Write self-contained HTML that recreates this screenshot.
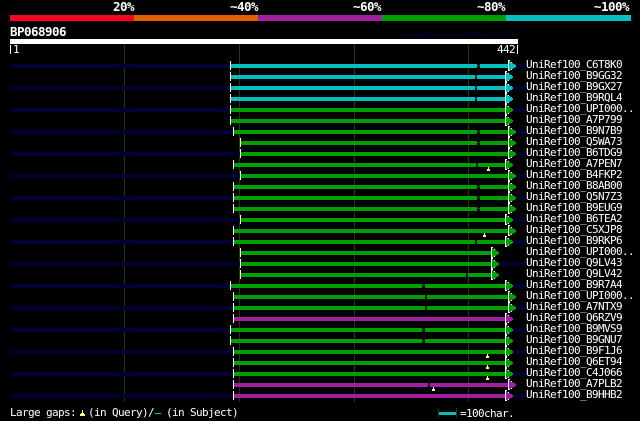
<!DOCTYPE html>
<html><head><meta charset="utf-8"><style>
html,body{margin:0;padding:0;background:#000;width:640px;height:421px;overflow:hidden}
svg{display:block}
text{font-family:"DejaVu Sans Mono","Liberation Mono",monospace;font-size:11px;letter-spacing:-.62px;fill:#fff}
.b{font-size:12.5px;letter-spacing:-.53px;font-weight:bold}
.h{font-size:8.3px;letter-spacing:0;font-weight:bold;fill:#000033}
.bars rect{height:4px}
</style></head><body>
<svg width="640" height="421" viewBox="0 0 640 421" shape-rendering="crispEdges">
<defs>
<g id="w"><rect x="0" y="-3" width="1" height="9" fill="#fff"/></g>
<g id="tw" fill="#fff"><rect x="0" y="-4" width="1" height="11"/><rect x="1" y="-4" width="1" height="1"/><rect x="3" y="-2" width="1" height="1"/><rect x="3" y="5" width="1" height="1"/><rect x="1" y="6" width="1" height="1"/></g>
<g id="t"><rect x="1" y="-3" width="1" height="9"/><rect x="2" y="-2" width="1" height="8"/><rect x="3" y="-1" width="2" height="6"/><rect x="5" y="0" width="2" height="4"/><rect x="7" y="1" width="1" height="2"/></g>
<g id="ac"><use href="#t" fill="#00c0c0"/><use href="#tw"/></g>
<g id="ag"><use href="#t" fill="#00a000"/><use href="#tw"/></g>
<g id="ap"><use href="#t" fill="#a020a0"/><use href="#tw"/></g>
<g id="m" fill="#ffff80"><rect x="1" y="3" width="1" height="2"/><rect x="0" y="5" width="3" height="2"/></g>
</defs>
<rect width="640" height="421" fill="#000"/>
<rect x="10" y="15" width="124" height="6" fill="#ff0020"/>
<rect x="134" y="15" width="124" height="6" fill="#e06000"/>
<rect x="258" y="15" width="124" height="6" fill="#a020a0"/>
<rect x="382" y="15" width="124" height="6" fill="#00a000"/>
<rect x="506" y="15" width="125" height="6" fill="#00c0c0"/>
<text class="b" x="113" y="11">20%</text>
<text class="b" x="230" y="11">~40%</text>
<text class="b" x="353" y="11">~60%</text>
<text class="b" x="477" y="11">~80%</text>
<text class="b" x="594" y="11">~100%</text>
<text class="b" x="10" y="36">BP068906</text>
<text class="h" x="402" y="37">AlignView.pm Beta rel.7</text>
<rect x="10" y="39" width="508" height="5" fill="#fff"/>
<rect x="10" y="45" width="1" height="9" fill="#fff"/>
<text x="13" y="53">1</text>
<text x="497" y="53">442</text>
<rect x="517" y="45" width="1" height="9" fill="#fff"/>
<g fill="#333300"><rect x="124" y="44" width="1" height="358"/><rect x="239" y="44" width="1" height="358"/><rect x="354" y="44" width="1" height="358"/><rect x="468" y="44" width="1" height="358"/></g>

<g fill="#000033" class="bars">
<rect x="10" y="64" width="220" height="3"/><rect x="514" y="64" width="12" height="3"/>
<rect x="10" y="86" width="220" height="3"/><rect x="511" y="86" width="15" height="3"/>
<rect x="10" y="108" width="220" height="3"/><rect x="511" y="108" width="15" height="3"/>
<rect x="10" y="130" width="223" height="3"/><rect x="514" y="130" width="12" height="3"/>
<rect x="10" y="152" width="230" height="3"/><rect x="514" y="152" width="12" height="3"/>
<rect x="10" y="174" width="230" height="3"/><rect x="514" y="174" width="12" height="3"/>
<rect x="10" y="196" width="223" height="3"/><rect x="514" y="196" width="12" height="3"/>
<rect x="10" y="218" width="230" height="3"/><rect x="511" y="218" width="15" height="3"/>
<rect x="10" y="240" width="223" height="3"/><rect x="511" y="240" width="15" height="3"/>
<rect x="10" y="262" width="230" height="3"/><rect x="497" y="262" width="29" height="3"/>
<rect x="10" y="284" width="220" height="3"/><rect x="511" y="284" width="15" height="3"/>
<rect x="10" y="306" width="223" height="3"/><rect x="514" y="306" width="12" height="3"/>
<rect x="10" y="328" width="220" height="3"/><rect x="511" y="328" width="15" height="3"/>
<rect x="10" y="350" width="223" height="3"/><rect x="511" y="350" width="15" height="3"/>
<rect x="10" y="372" width="223" height="3"/><rect x="511" y="372" width="15" height="3"/>
<rect x="10" y="394" width="223" height="3"/><rect x="511" y="394" width="15" height="3"/>
</g>

<g fill="#00c0c0" class="bars">
<rect x="231" y="64" width="277" height="3"/>
<rect x="231" y="75" width="274" height="3"/>
<rect x="231" y="86" width="274" height="3"/>
<rect x="231" y="97" width="274" height="3"/>
</g>
<g fill="#00a000" class="bars">
<rect x="231" y="108" width="274" height="3"/>
<rect x="231" y="119" width="274" height="3"/>
<rect x="234" y="130" width="274" height="3"/>
<rect x="241" y="141" width="267" height="3"/>
<rect x="241" y="152" width="267" height="3"/>
<rect x="234" y="163" width="271" height="3"/>
<rect x="241" y="174" width="267" height="3"/>
<rect x="234" y="185" width="274" height="3"/>
<rect x="234" y="196" width="274" height="3"/>
<rect x="234" y="207" width="274" height="3"/>
<rect x="241" y="218" width="264" height="3"/>
<rect x="234" y="229" width="274" height="3"/>
<rect x="234" y="240" width="271" height="3"/>
<rect x="241" y="251" width="250" height="3"/>
<rect x="241" y="262" width="250" height="3"/>
<rect x="241" y="273" width="250" height="3"/>
<rect x="231" y="284" width="274" height="3"/>
<rect x="234" y="295" width="274" height="3"/>
<rect x="234" y="306" width="274" height="3"/>
<rect x="231" y="328" width="274" height="3"/>
<rect x="231" y="339" width="274" height="3"/>
<rect x="234" y="350" width="271" height="3"/>
<rect x="234" y="361" width="271" height="3"/>
<rect x="234" y="372" width="271" height="3"/>
</g>
<g fill="#a020a0" class="bars">
<rect x="234" y="317" width="271" height="3"/>
<rect x="234" y="383" width="274" height="3"/>
<rect x="234" y="394" width="271" height="3"/>
</g>

<g fill="#000" class="bars">
<rect x="477" y="64" width="3" height="3"/>
<rect x="475" y="75" width="2" height="3"/>
<rect x="475" y="86" width="2" height="3"/>
<rect x="475" y="97" width="2" height="3"/>
<rect x="477" y="130" width="3" height="3"/>
<rect x="477" y="141" width="3" height="3"/>
<rect x="476" y="163" width="2" height="3"/>
<rect x="477" y="185" width="3" height="3"/>
<rect x="477" y="196" width="3" height="3"/>
<rect x="477" y="207" width="3" height="3"/>
<rect x="475" y="240" width="2" height="3"/>
<rect x="466" y="273" width="2" height="3"/>
<rect x="422" y="284" width="3" height="3"/>
<rect x="425" y="295" width="2" height="3"/>
<rect x="425" y="306" width="2" height="3"/>
<rect x="422" y="328" width="3" height="3"/>
<rect x="422" y="339" width="3" height="3"/>
<rect x="428" y="383" width="2" height="3"/>
</g>
<g fill="#006060">
<rect x="477" y="65" width="3" height="1"/>
<rect x="475" y="76" width="2" height="1"/>
<rect x="475" y="87" width="2" height="1"/>
<rect x="475" y="98" width="2" height="1"/>
</g>
<g fill="#005000">
<rect x="477" y="131" width="3" height="1"/>
<rect x="477" y="142" width="3" height="1"/>
<rect x="476" y="164" width="2" height="1"/>
<rect x="477" y="186" width="3" height="1"/>
<rect x="477" y="197" width="3" height="1"/>
<rect x="477" y="208" width="3" height="1"/>
<rect x="475" y="241" width="2" height="1"/>
<rect x="466" y="274" width="2" height="1"/>
<rect x="422" y="285" width="3" height="1"/>
<rect x="425" y="296" width="2" height="1"/>
<rect x="425" y="307" width="2" height="1"/>
<rect x="422" y="329" width="3" height="1"/>
<rect x="422" y="340" width="3" height="1"/>
</g>
<rect x="428" y="384" width="2" height="1" fill="#501050"/>

<g>
<use href="#w" x="230" y="64"/><use href="#w" x="230" y="75"/><use href="#w" x="230" y="86"/><use href="#w" x="230" y="97"/>
<use href="#w" x="230" y="108"/><use href="#w" x="230" y="119"/><use href="#w" x="233" y="130"/><use href="#w" x="240" y="141"/>
<use href="#w" x="240" y="152"/><use href="#w" x="233" y="163"/><use href="#w" x="240" y="174"/><use href="#w" x="233" y="185"/>
<use href="#w" x="233" y="196"/><use href="#w" x="233" y="207"/><use href="#w" x="240" y="218"/><use href="#w" x="233" y="229"/>
<use href="#w" x="233" y="240"/><use href="#w" x="240" y="251"/><use href="#w" x="240" y="262"/><use href="#w" x="240" y="273"/>
<use href="#w" x="230" y="284"/><use href="#w" x="233" y="295"/><use href="#w" x="233" y="306"/><use href="#w" x="233" y="317"/>
<use href="#w" x="230" y="328"/><use href="#w" x="230" y="339"/><use href="#w" x="233" y="350"/><use href="#w" x="233" y="361"/>
<use href="#w" x="233" y="372"/><use href="#w" x="233" y="383"/><use href="#w" x="233" y="394"/>
</g>
<g>
<use href="#ac" x="508" y="64"/><use href="#ac" x="505" y="75"/><use href="#ac" x="505" y="86"/><use href="#ac" x="505" y="97"/>
<use href="#ag" x="505" y="108"/><use href="#ag" x="505" y="119"/><use href="#ag" x="508" y="130"/><use href="#ag" x="508" y="141"/>
<use href="#ag" x="508" y="152"/><use href="#ag" x="505" y="163"/><use href="#ag" x="508" y="174"/><use href="#ag" x="508" y="185"/>
<use href="#ag" x="508" y="196"/><use href="#ag" x="508" y="207"/><use href="#ag" x="505" y="218"/><use href="#ag" x="508" y="229"/>
<use href="#ag" x="505" y="240"/><use href="#ag" x="491" y="251"/><use href="#ag" x="491" y="262"/><use href="#ag" x="491" y="273"/>
<use href="#ag" x="505" y="284"/><use href="#ag" x="508" y="295"/><use href="#ag" x="508" y="306"/><use href="#ap" x="505" y="317"/>
<use href="#ag" x="505" y="328"/><use href="#ag" x="505" y="339"/><use href="#ag" x="505" y="350"/><use href="#ag" x="505" y="361"/>
<use href="#ag" x="505" y="372"/><use href="#ap" x="508" y="383"/><use href="#ap" x="505" y="394"/>
</g>
<use href="#m" x="487" y="164"/><use href="#m" x="483" y="230"/><use href="#m" x="486" y="351"/><use href="#m" x="486" y="362"/><use href="#m" x="486" y="373"/><use href="#m" x="432" y="384"/>

<text x="526" y="68">UniRef100_C6T8K0</text>
<text x="526" y="79">UniRef100_B9GG32</text>
<text x="526" y="90">UniRef100_B9GX27</text>
<text x="526" y="101">UniRef100_B9RQL4</text>
<text x="526" y="112">UniRef100_UPI000..</text>
<text x="526" y="123">UniRef100_A7P799</text>
<text x="526" y="134">UniRef100_B9N7B9</text>
<text x="526" y="145">UniRef100_Q5WA73</text>
<text x="526" y="156">UniRef100_B6TDG9</text>
<text x="526" y="167">UniRef100_A7PEN7</text>
<text x="526" y="178">UniRef100_B4FKP2</text>
<text x="526" y="189">UniRef100_B8AB00</text>
<text x="526" y="200">UniRef100_Q5N7Z3</text>
<text x="526" y="211">UniRef100_B9EUG9</text>
<text x="526" y="222">UniRef100_B6TEA2</text>
<text x="526" y="233">UniRef100_C5XJP8</text>
<text x="526" y="244">UniRef100_B9RKP6</text>
<text x="526" y="255">UniRef100_UPI000..</text>
<text x="526" y="266">UniRef100_Q9LV43</text>
<text x="526" y="277">UniRef100_Q9LV42</text>
<text x="526" y="288">UniRef100_B9R7A4</text>
<text x="526" y="299">UniRef100_UPI000..</text>
<text x="526" y="310">UniRef100_A7NTX9</text>
<text x="526" y="321">UniRef100_Q6RZV9</text>
<text x="526" y="332">UniRef100_B9MVS9</text>
<text x="526" y="343">UniRef100_B9GNU7</text>
<text x="526" y="354">UniRef100_B9F1J6</text>
<text x="526" y="365">UniRef100_Q6ET94</text>
<text x="526" y="376">UniRef100_C4J066</text>
<text x="526" y="387">UniRef100_A7PLB2</text>
<text x="526" y="398">UniRef100_B9HHB2</text>

<text x="10" y="416">Large gaps:</text>
<g fill="#ffff80"><rect x="82" y="410" width="1" height="3"/><rect x="81" y="413" width="3" height="1"/><rect x="80" y="414" width="5" height="2"/></g>
<text x="88" y="416">(in Query)/</text>
<rect x="155" y="413" width="6" height="1" fill="#00c0c0"/>
<text x="166" y="416">(in Subject)</text>
<rect x="438" y="408" width="1" height="10" fill="#333300"/>
<rect x="456" y="408" width="1" height="10" fill="#333300"/>
<rect x="439" y="412" width="17" height="3" fill="#00c0c0"/>
<text x="460" y="417">=100char.</text>
</svg>
</body></html>
